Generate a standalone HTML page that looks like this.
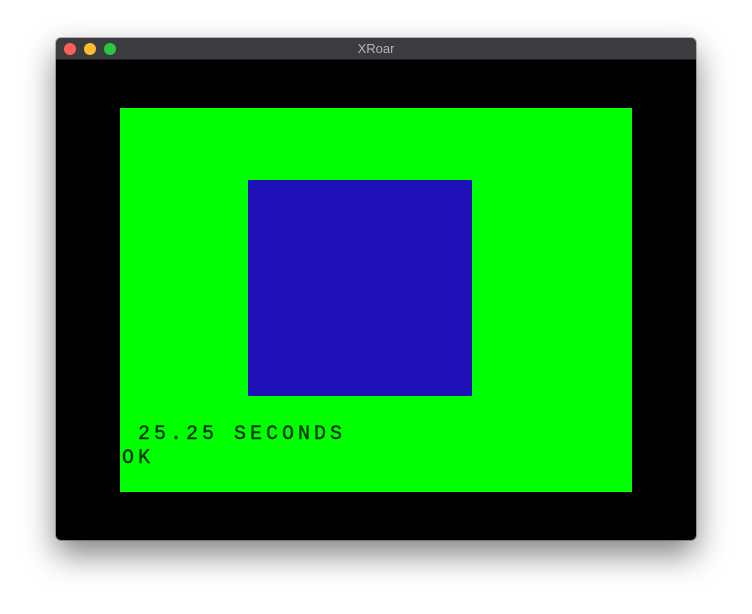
<!DOCTYPE html>
<html><head><style>
html,body{margin:0;padding:0;width:752px;height:614px;background:#fff;overflow:hidden;position:relative;font-family:"Liberation Sans",sans-serif}
.win{position:absolute;left:56px;top:38px;width:640px;height:502px;background:#000;border-radius:5px;overflow:hidden;box-shadow:0 14px 32px rgba(0,0,0,.5),0 0 0 1px rgba(0,0,0,.25)}
.tb{position:absolute;left:0;top:0;width:640px;height:21px;background:#3b3c3f;border-bottom:1px solid #222}
.tb .t{position:absolute;width:100%;text-align:center;top:3px;font-size:13px;color:#b4b4b4}
.d{position:absolute;top:5px;width:12px;height:12px;border-radius:50%}
.g{position:absolute;left:64px;top:70px;width:512px;height:384px;background:#00ff00}
.b{position:absolute;left:128px;top:72px;width:224px;height:216px;background:#2010b8}
.txt{position:absolute;font-family:"Liberation Mono",monospace;font-size:20px;letter-spacing:4px;color:#003000;line-height:20px;white-space:pre;-webkit-text-stroke:0.4px #003000}
</style></head><body>
<div class="win">
<div class="tb"><div class="d" style="left:8px;background:#fe5f57"></div><div class="d" style="left:28px;background:#febc2e"></div><div class="d" style="left:48px;background:#28c840"></div><div class="t">XRoar</div></div>
<div class="g">
<div class="b"></div>
<div class="txt" style="left:2px;top:317px"> 25.25 SECONDS</div>
<div class="txt" style="left:2px;top:341px">OK</div>
</div>
</div>
</body></html>
